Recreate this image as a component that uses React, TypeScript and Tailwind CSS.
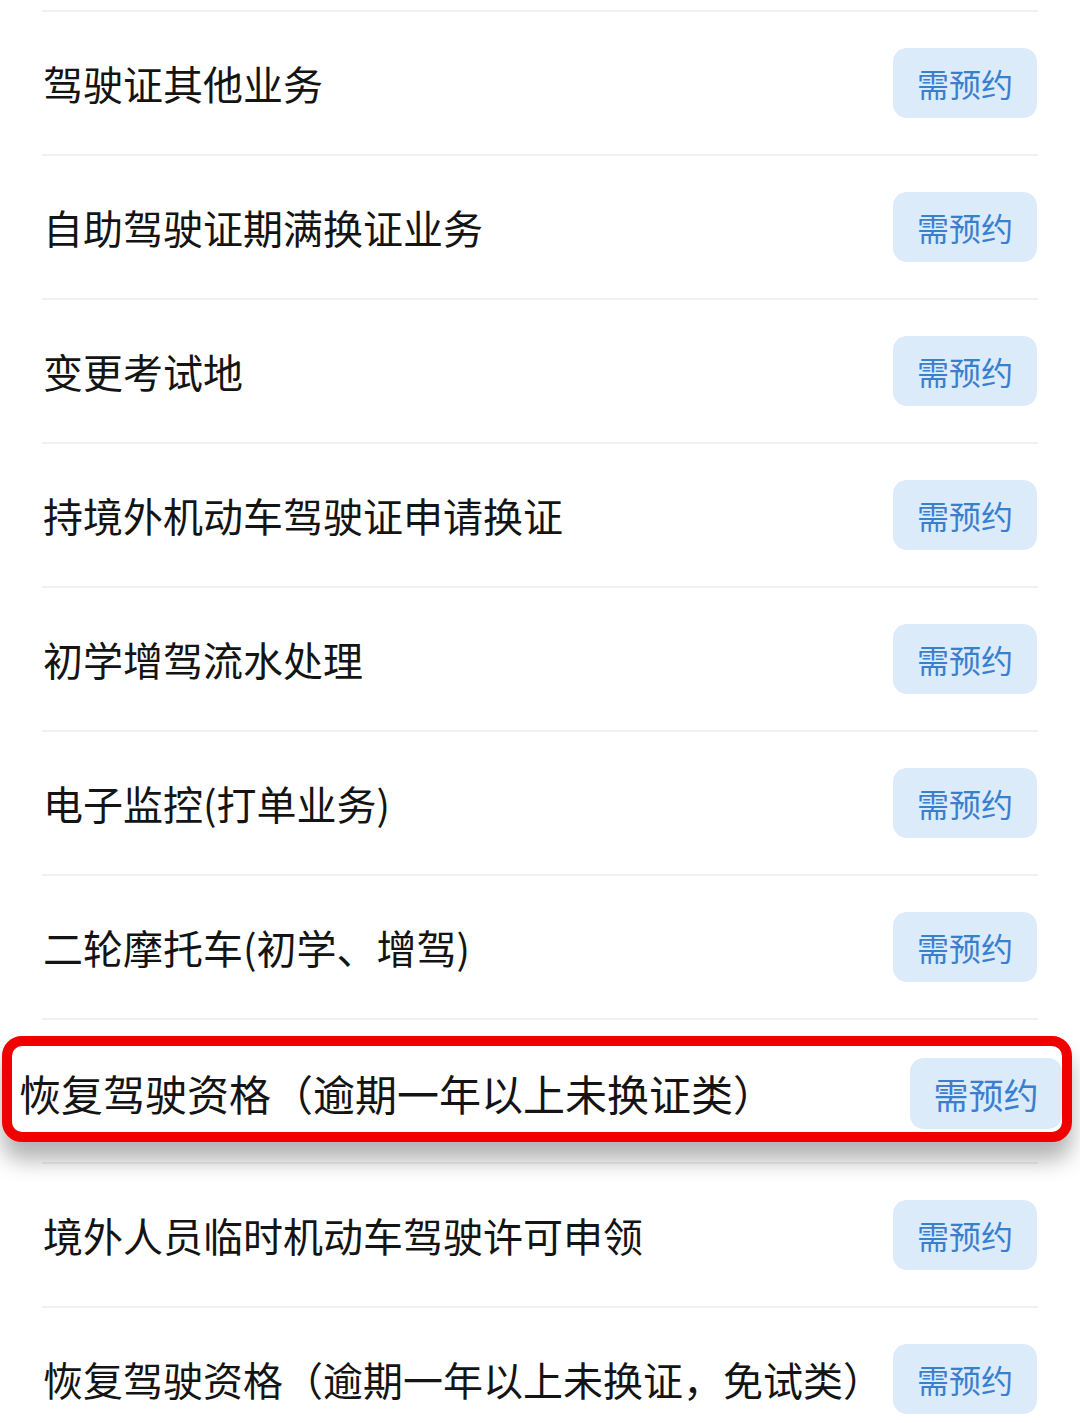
import React from "react";

const FONT = '"Noto Sans CJK SC", "Noto Sans", sans-serif';

const rowsTop = [
  "驾驶证其他业务",
  "自助驾驶证期满换证业务",
  "变更考试地",
  "持境外机动车驾驶证申请换证",
  "初学增驾流水处理",
  "电子监控(打单业务)",
  "二轮摩托车(初学、增驾)",
];

const rowsBottom = [
  "境外人员临时机动车驾驶许可申领",
  "恢复驾驶资格（逾期一年以上未换证，免试类）",
];

function Badge() {
  return (
    <div className="flex h-[70px] w-[144px] shrink-0 items-center justify-center rounded-[14px] bg-[#dcebfa] text-[32px] leading-none text-[#3a7fcf]">
      需预约
    </div>
  );
}

function Divider() {
  return <div className="mx-[42px] h-[2px] bg-[#f1f1f1]" />;
}

function Row({ text }: { text: string }) {
  return (
    <div className="flex h-[142px] items-center justify-between pl-[43px] pr-[43px]">
      <span className="text-[40px] leading-none text-[#141414]">{text}</span>
      <Badge />
    </div>
  );
}

export default function App() {
  return (
    <div className="h-[1423px] w-[1080px] overflow-hidden bg-white" style={{ fontFamily: FONT }}>
      <div className="h-[10px]" />
      <Divider />
      {rowsTop.map((t) => (
        <React.Fragment key={t}>
          <Row text={t} />
          <Divider />
        </React.Fragment>
      ))}
      <div className="relative h-[142px] pl-[2px] pr-[8px] pt-[16px]">
        <div className="flex h-[106px] items-center justify-between rounded-[20px] border-[10px] border-[#f00000] bg-white pl-[7px] pr-0 pt-[8px] shadow-[0_18px_22px_rgba(0,0,0,0.3)]">
          <span className="text-[42px] leading-none text-[#141414]">恢复驾驶资格（逾期一年以上未换证类）</span>
          <div className="flex h-[71px] w-[152px] shrink-0 items-center justify-center rounded-[14px] bg-[#dcebfa] text-[35px] leading-none text-[#3a7fcf]">
            需预约
          </div>
        </div>
      </div>
      <Divider />
      {rowsBottom.map((t) => (
        <React.Fragment key={t}>
          <Row text={t} />
          <Divider />
        </React.Fragment>
      ))}
    </div>
  );
}
